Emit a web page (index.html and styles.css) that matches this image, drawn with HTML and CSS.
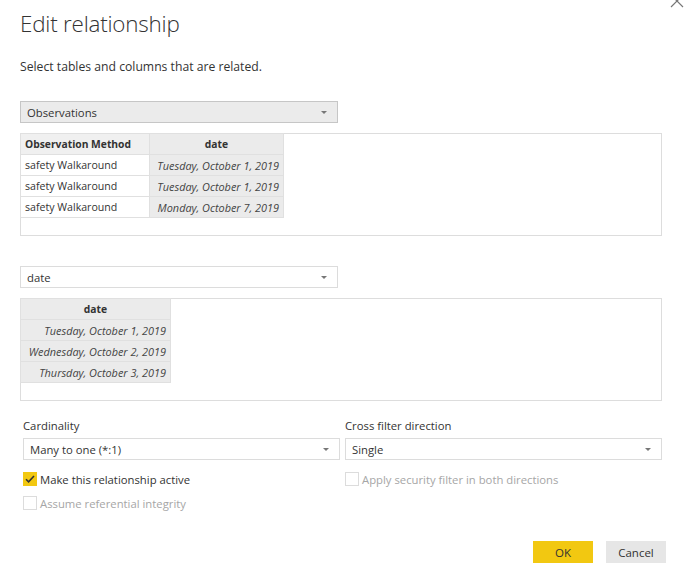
FILE: index.html
```html
<!DOCTYPE html>
<html>
<head>
<meta charset="utf-8">
<link rel="stylesheet" href="styles.css">
</head>
<body>
<div class="dialog">
  <svg class="close" width="14" height="14" viewBox="0 0 14 14"><path d="M1 1L13 13M13 1L1 13" stroke="#777" stroke-width="1.2" fill="none"/></svg>
  <h1 class="title">Edit relationship</h1>
  <p class="subtitle">Select tables and columns that are related.</p>

  <div class="select select-gray"><span>Observations</span><i class="caret"></i></div>
  <div class="grid-box">
    <table class="grid">
      <tr><th class="c1 left">Observation Method</th><th class="c2">date</th></tr>
      <tr><td class="c1">safety Walkaround</td><td class="c2 dt">Tuesday, October 1, 2019</td></tr>
      <tr><td class="c1">safety Walkaround</td><td class="c2 dt">Tuesday, October 1, 2019</td></tr>
      <tr><td class="c1">safety Walkaround</td><td class="c2 dt">Monday, October 7, 2019</td></tr>
    </table>
  </div>

  <div class="select select-white second"><span>date</span><i class="caret"></i></div>
  <div class="grid-box">
    <table class="grid">
      <tr><th class="c3">date</th></tr>
      <tr><td class="c3 dt">Tuesday, October 1, 2019</td></tr>
      <tr><td class="c3 dt">Wednesday, October 2, 2019</td></tr>
      <tr><td class="c3 dt">Thursday, October 3, 2019</td></tr>
    </table>
  </div>

  <div class="options">
    <div class="opt-col">
      <div class="label">Cardinality</div>
      <div class="select select-white wide"><span>Many to one (*:1)</span><i class="caret"></i></div>
      <label class="check"><span class="box on"><svg width="14" height="14" viewBox="0 0 14 14"><path d="M3 7.2L5.6 9.8L11 4" stroke="#333" stroke-width="1.6" fill="none"/></svg></span>Make this relationship active</label>
      <label class="check disabled"><span class="box"></span>Assume referential integrity</label>
    </div>
    <div class="opt-col">
      <div class="label">Cross filter direction</div>
      <div class="select select-white wide"><span>Single</span><i class="caret"></i></div>
      <label class="check disabled"><span class="box"></span>Apply security filter in both directions</label>
    </div>
  </div>

  <div class="buttons">
    <button class="btn ok">OK</button>
    <button class="btn cancel">Cancel</button>
  </div>
</div>
</body>
</html>
```
FILE: styles.css
```css
html, body { margin: 0; padding: 0; background: #fff; }
body { font-family: "Open Sans", "Noto Sans", sans-serif; color: #333; }
.dialog { position: relative; width: 685px; height: 579px; box-sizing: border-box; padding: 0 0 0 20px; overflow: hidden; }
.close { position: absolute; right: 1px; top: -6px; }
.title { margin: 0; padding-top: 8px; font-weight: 300; font-size: 22.4px; line-height: 32px; color: #333; letter-spacing: -0.2px; }
.subtitle { margin: 18px 0 0; font-size: 12.2px; line-height: 17px; color: #333; }
.select { box-sizing: border-box; height: 22px; display: flex; align-items: center; justify-content: space-between; padding: 0 10px 0 6px; font-size: 11.3px; color: #333; }
.select-gray { width: 318px; margin-top: 26px; background: #ebebeb; border: 1px solid #c6c6c6; }
.select-white { width: 318px; background: #fff; border: 1px solid #dcdcdc; }
.second { margin-top: 30px; }
.caret { width: 0; height: 0; border-left: 3.5px solid transparent; border-right: 3.5px solid transparent; border-top: 3.5px solid #777; }
.grid-box { box-sizing: border-box; width: 642px; height: 103px; margin-top: 10px; border: 1px solid #dddddd; }
.grid { border-collapse: collapse; margin: -1px 0 0 -1px; font-size: 10.6px; }
.grid tr { height: 21px; }
.grid th, .grid td { box-sizing: border-box; border: 1px solid #e0e0e0; padding: 0 4px; white-space: nowrap; line-height: 19px; }
.grid th { font-size: 10.3px; font-weight: 700; text-align: center; background: #ebebeb; color: #333; }
.grid th.left { text-align: left; background: #f0f0f0; }
.grid td { color: #333; }
.c1 { width: 129px; }
.c2 { width: 134px; }
.c3 { width: 150px; }
.grid td.dt { font-size: 10.9px; font-style: italic; text-align: right; background: #ebebeb; color: #444; }
.options { display: grid; grid-template-columns: 322px 317px; margin: 16px 0 0 3px; }
.label { font-size: 11.3px; line-height: 17px; color: #333; }
.wide { width: 317px; margin-top: 4px; padding-left: 6px; }
.check { display: flex; align-items: center; gap: 3px; font-size: 11.3px; color: #333; height: 14px; margin-top: 12px; }
.check + .check { margin-top: 10px; }
.check.disabled { color: #a6a6a6; }
.box { box-sizing: border-box; width: 14px; height: 14px; border: 1px solid #dcdcdc; background: #fff; display: inline-flex; }
.box.on { background: #f2c811; border-color: #f2c811; }
.box svg { margin: -1px; }
.buttons { position: absolute; left: 533px; top: 541px; display: flex; gap: 13px; }
.btn { width: 60px; height: 22px; border: none; font-family: "Open Sans", sans-serif; font-size: 11.5px; color: #333; padding: 0; }
.ok { background: #f2c811; }
.cancel { background: #e6e6e6; }
```
